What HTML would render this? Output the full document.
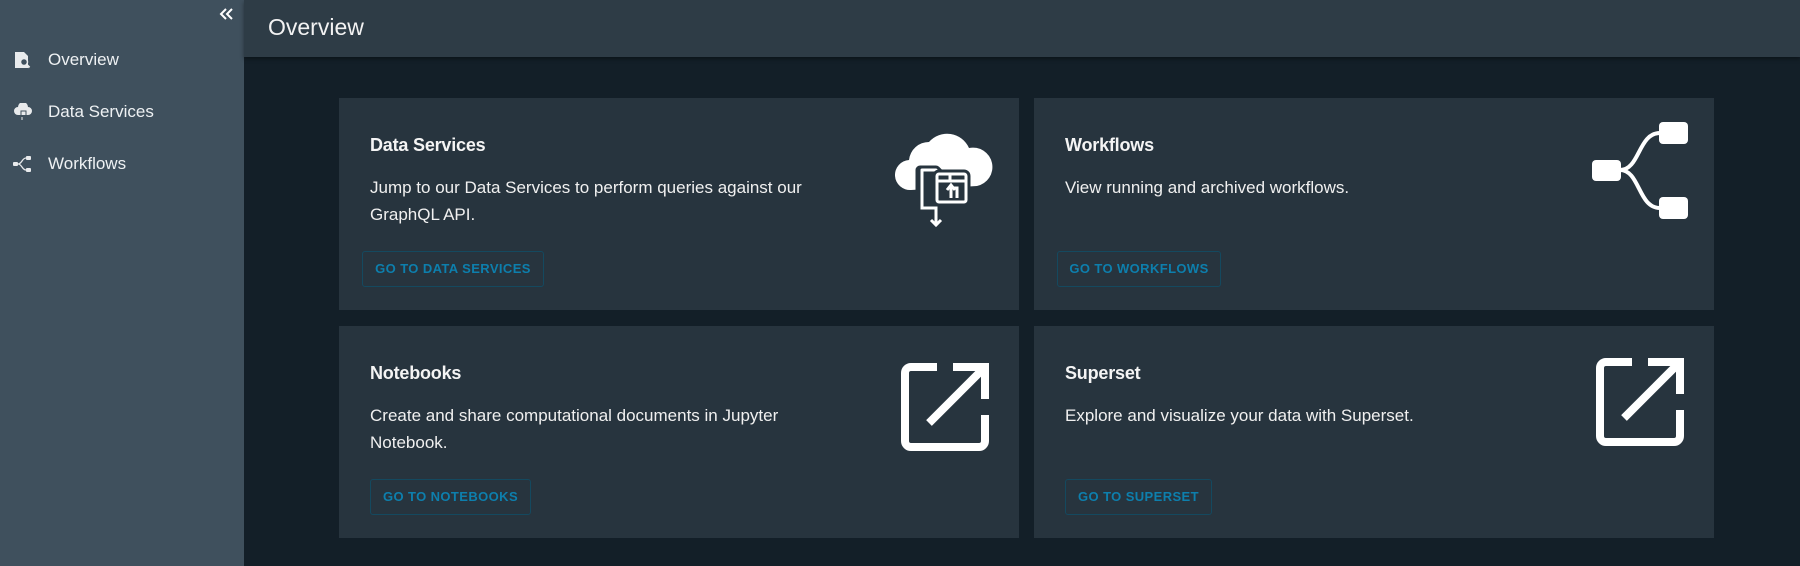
<!DOCTYPE html>
<html><head><meta charset="utf-8"><style>
*{margin:0;padding:0;box-sizing:border-box}
body{width:1800px;height:566px;background:#131f28;font-family:"Liberation Sans",sans-serif;position:relative;overflow:hidden;color:#fff}
.side{position:absolute;left:0;top:0;width:244px;height:566px;background:#3f505d}
.hdr{position:absolute;left:244px;top:0;right:0;height:57px;background:#2e3c46;box-shadow:0 2px 4px rgba(0,0,0,.4)}
.hdr span{position:absolute;left:24px;top:14px;font-size:23px;color:#f2f2f2}
.item{position:absolute;left:48px;font-size:17px;color:#eef1f3}
.card{position:absolute;background:#27343e;width:680px;height:212px}
.t{position:absolute;left:31px;top:37px;font-size:18px;font-weight:bold;color:#f4f4f4;letter-spacing:-.2px}
.d{position:absolute;left:31px;top:76px;font-size:17px;line-height:27px;color:#f0f0f0;width:490px}
.b{position:absolute;height:36px;border:1px solid #14495f;border-radius:3px;color:#0d7fad;font-size:13px;font-weight:bold;letter-spacing:.4px;line-height:34px;text-align:center}
svg{position:absolute}
</style></head><body>
<div class="side">
<svg style="left:218px;top:6px" width="16" height="16" viewBox="0 0 16 16"><path d="M8 3L3 8l5 5M14 3L9 8l5 5" stroke="#fff" stroke-width="2" fill="none"/></svg>
<svg style="left:14px;top:51px" width="18" height="18" viewBox="0 0 18 18"><path d="M1 1h9l4 4v12H1z" fill="#e8eaec"/><circle cx="10" cy="11" r="3.5" fill="#3f505d" stroke="#e8eaec" stroke-width="1.5"/><path d="M12.5 13.5l3 3" stroke="#e8eaec" stroke-width="2"/></svg>
<div class="item" style="top:50px">Overview</div>
<svg style="left:13px;top:103px" width="20" height="18" viewBox="0 0 20 18"><path d="M5 12a4 4 0 0 1 0-8 5 5 0 0 1 10 0 4 4 0 0 1 0 8z" fill="#e8eaec"/><rect x="8" y="8" width="5" height="6" fill="none" stroke="#3f505d"/><path d="M9 14v3" stroke="#e8eaec"/></svg>
<div class="item" style="top:102px">Data Services</div>
<svg style="left:13px;top:155px" width="20" height="18" viewBox="0 0 20 18"><rect x="0" y="7" width="5" height="4" rx="1" fill="#e8eaec"/><rect x="13" y="1" width="5" height="4" rx="1" fill="#e8eaec"/><rect x="13" y="13" width="5" height="4" rx="1" fill="#e8eaec"/><path d="M5 9C9 9 9 3 13 3M5 9c4 0 4 6 8 6" stroke="#e8eaec" stroke-width="1.3" fill="none"/></svg>
<div class="item" style="top:154px">Workflows</div>
</div>
<div class="hdr"><span>Overview</span></div>

<div class="card" style="left:339px;top:98px">
<div class="t">Data Services</div>
<div class="d" style="width:500px">Jump to our Data Services to perform queries against our GraphQL API.</div>
<div class="b" style="left:23px;top:153px;width:182px">GO TO DATA SERVICES</div>
<svg style="left:556px;top:30px" width="100" height="100" viewBox="0 0 100 100">
<path d="M16 62a15 15 0 0 1 -2 -30a20 20 0 0 1 20 -18a24 24 0 0 1 40 6a18 18 0 0 1 8 38z" fill="#fff"/>
<path d="M25 42h16l4 4h10v28H25z" fill="#27343e" stroke="#27343e" stroke-width="9" stroke-linejoin="round"/>
<path d="M27 73V42h14l4 4h8" stroke="#fff" stroke-width="3" fill="none" stroke-linejoin="round"/>
<rect x="42" y="46" width="29" height="28" rx="2" fill="#27343e" stroke="#27343e" stroke-width="9"/>
<rect x="42" y="46" width="29" height="28" rx="2" fill="#27343e" stroke="#fff" stroke-width="3"/>
<path d="M42 53h29M55 46v7" stroke="#fff" stroke-width="3"/>
<path d="M56 70V60h6v10" stroke="#fff" stroke-width="3" fill="none"/>
<path d="M52 62l4-5 4 5" stroke="#fff" stroke-width="3" fill="none"/>
<path d="M27 73v7h14v17m-5-5l5 5 5-5" stroke="#27343e" stroke-width="7" fill="none"/>
<path d="M27 73v7h14v17m-5-5l5 5 5-5" stroke="#fff" stroke-width="3" fill="none"/>
</svg>
</div>

<div class="card" style="left:1034px;top:98px">
<div class="t">Workflows</div>
<div class="d">View running and archived workflows.</div>
<div class="b" style="left:23px;top:153px;width:164px">GO TO WORKFLOWS</div>
<svg style="left:556px;top:22px" width="110" height="110" viewBox="0 0 110 110">
<rect x="2" y="40" width="29" height="21" rx="4" fill="#fff"/>
<rect x="69" y="2" width="29" height="22" rx="4" fill="#fff"/>
<rect x="69" y="77" width="29" height="22" rx="4" fill="#fff"/>
<path d="M30 50C50 50 48 13 70 13M30 50C50 50 48 88 70 88" stroke="#fff" stroke-width="4" fill="none"/>
</svg>
</div>

<div class="card" style="left:339px;top:326px">
<div class="t">Notebooks</div>
<div class="d" style="width:470px">Create and share computational documents in Jupyter Notebook.</div>
<div class="b" style="left:31px;top:153px;width:161px">GO TO NOTEBOOKS</div>
<svg style="left:562px;top:37px" width="88" height="88" viewBox="0 0 88 88">
<path d="M36 4H10a6 6 0 0 0-6 6v68a6 6 0 0 0 6 6h68a6 6 0 0 0 6-6V52" stroke="#fff" stroke-width="8" fill="none"/>
<path d="M52 4h32v32" stroke="#fff" stroke-width="8" fill="none"/>
<path d="M81 7L28 60" stroke="#fff" stroke-width="8"/>
</svg>
</div>

<div class="card" style="left:1034px;top:326px">
<div class="t">Superset</div>
<div class="d">Explore and visualize your data with Superset.</div>
<div class="b" style="left:31px;top:153px;width:147px">GO TO SUPERSET</div>
<svg style="left:562px;top:32px" width="88" height="88" viewBox="0 0 88 88">
<path d="M36 4H10a6 6 0 0 0-6 6v68a6 6 0 0 0 6 6h68a6 6 0 0 0 6-6V52" stroke="#fff" stroke-width="8" fill="none"/>
<path d="M52 4h32v32" stroke="#fff" stroke-width="8" fill="none"/>
<path d="M81 7L28 60" stroke="#fff" stroke-width="8"/>
</svg>
</div>
</body></html>
